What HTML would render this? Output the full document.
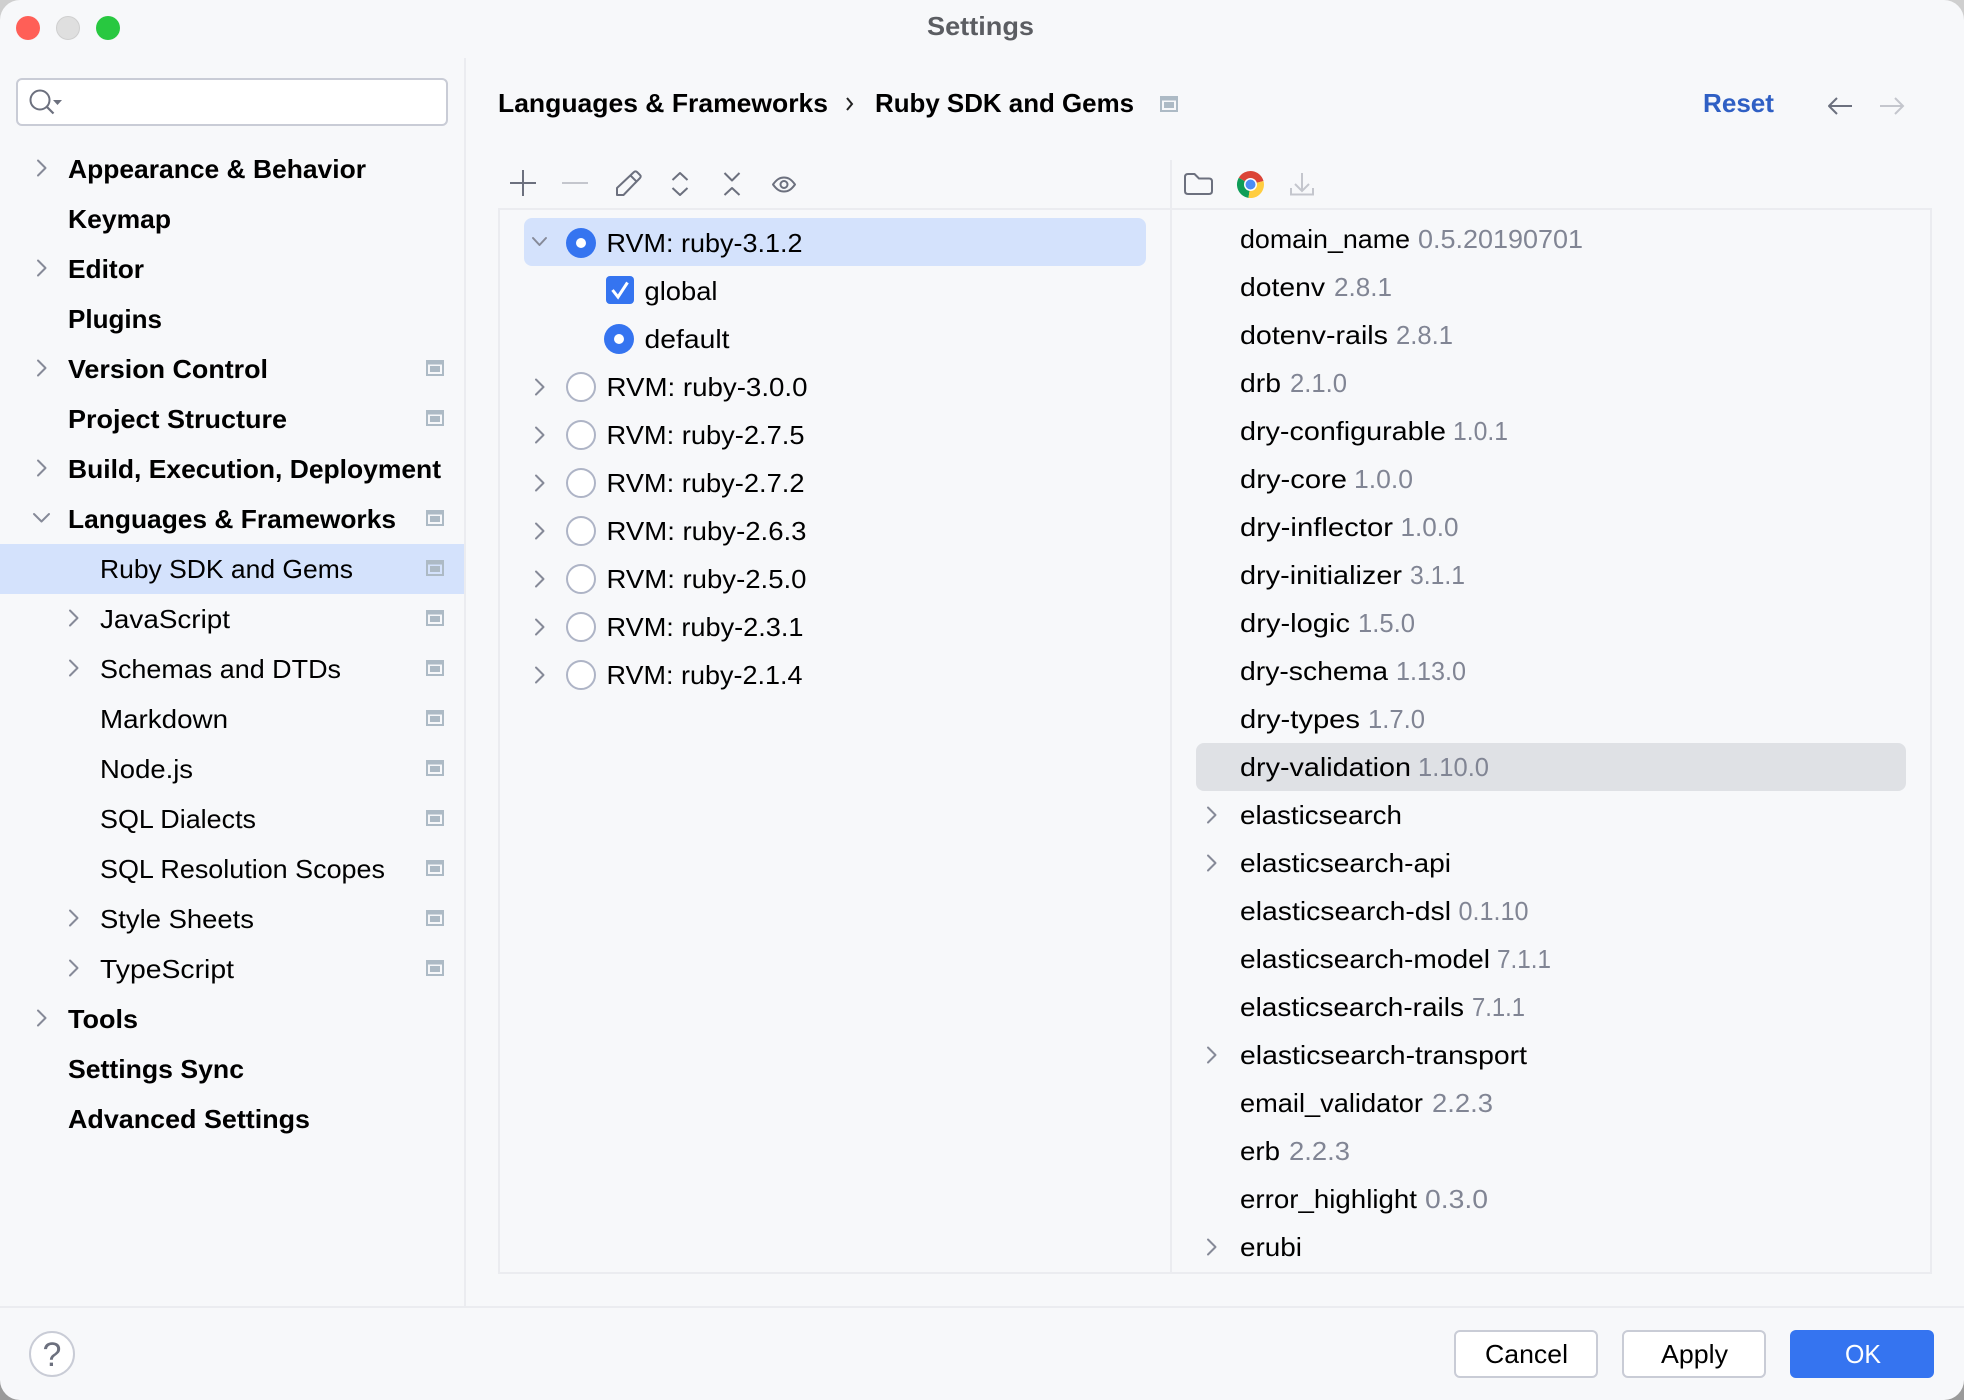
<!DOCTYPE html>
<html lang="en">
<head>
<meta charset="utf-8">
<title>Settings</title>
<style>
html,body{margin:0;padding:0;width:1964px;height:1400px;overflow:hidden;background:#c4c4c4}
svg{display:block;position:absolute;left:0;top:0}
text{font-family:"Liberation Sans",Arial,sans-serif;font-size:26px;fill:#000}
.b{font-weight:700}
.v{fill:#818594}
.c{fill:none;stroke:#868a98;stroke-width:2;stroke-linecap:round;stroke-linejoin:round}
.i{fill:none;stroke:#6c707e;stroke-width:2;stroke-linejoin:round}
.d{fill:none;stroke:#c4c6cd;stroke-width:2}
.f{fill:#adbac5}
.h{fill:#f7f8fa}
.r{fill:#fff;stroke:#aeb4c6;stroke-width:2}
</style>
</head>
<body>
<svg width="1964" height="1400" viewBox="0 0 1964 1400" xmlns="http://www.w3.org/2000/svg">
<defs>
<linearGradient id="bg" x1="0" y1="0" x2="0" y2="1"><stop offset="0" stop-color="#cfcfcf"/><stop offset="1" stop-color="#9a9a9a"/></linearGradient>
<g id="p"><rect class="f" x="0" y="0" width="18" height="16"/><rect class="h" x="2" y="4.5" width="14" height="9.5"/><rect class="f" x="4" y="6" width="10" height="6"/></g>
<path id="cr" class="c" d="M0 -7.5 L7.5 0 L0 7.5"/>
</defs>
<rect width="1964" height="1400" fill="url(#bg)"/>
<rect width="1964" height="1400" rx="20" ry="20" fill="#f7f8fa"/>

<!-- traffic lights -->
<circle cx="28" cy="28" r="12" fill="#ff5f57"/>
<circle cx="68" cy="28" r="11.5" fill="#dfdfdf" stroke="#cfcfcf"/>
<circle cx="108" cy="28" r="12" fill="#28c840"/>
<text x="927" y="35" textLength="107" lengthAdjust="spacingAndGlyphs" class="b" style="fill:#5b5d62">Settings</text>

<!-- structure lines -->
<rect x="464" y="58" width="2" height="1250" fill="#ebecf0"/>
<rect x="0" y="1306" width="1964" height="2" fill="#ebecf0"/>
<rect x="499" y="209" width="1432" height="1064" fill="none" stroke="#ebecf0" stroke-width="2"/>
<rect x="1170" y="160" width="2" height="1114" fill="#ebecf0"/>

<!-- search -->
<rect x="17" y="79" width="430" height="46" rx="5" fill="#fff" stroke="#c9ccd6" stroke-width="2"/>
<circle cx="40" cy="100" r="9.5" fill="none" stroke="#6c707e" stroke-width="2"/>
<path d="M47 107 L53.5 113.5" stroke="#6c707e" stroke-width="2.2" fill="none"/>
<path d="M53 100 H62 L57.5 105 Z" fill="#6c707e"/>

<!-- left nav -->
<rect x="0" y="544" width="464" height="50" fill="#d4e2fc"/>
<use href="#cr" x="38" y="168"/>
<use href="#cr" x="38" y="268"/>
<use href="#cr" x="38" y="368"/>
<use href="#cr" x="38" y="468"/>
<path class="c" d="M34 514 L41.500 521.500 L49 514"/>
<use href="#cr" x="70" y="618"/>
<use href="#cr" x="70" y="668"/>
<use href="#cr" x="70" y="918"/>
<use href="#cr" x="70" y="968"/>
<use href="#cr" x="38" y="1018"/>

<text x="68" y="178" textLength="298" lengthAdjust="spacingAndGlyphs" class="b">Appearance &amp; Behavior</text>
<text x="68" y="228" textLength="103" lengthAdjust="spacingAndGlyphs" class="b">Keymap</text>
<text x="68" y="278" textLength="76" lengthAdjust="spacingAndGlyphs" class="b">Editor</text>
<text x="68" y="328" textLength="94" lengthAdjust="spacingAndGlyphs" class="b">Plugins</text>
<text x="68" y="378" textLength="200" lengthAdjust="spacingAndGlyphs" class="b">Version Control</text>
<text x="68" y="428" textLength="219" lengthAdjust="spacingAndGlyphs" class="b">Project Structure</text>
<text x="68" y="478" textLength="373" lengthAdjust="spacingAndGlyphs" class="b">Build, Execution, Deployment</text>
<text x="68" y="528" textLength="328" lengthAdjust="spacingAndGlyphs" class="b">Languages &amp; Frameworks</text>
<text x="100" y="578" textLength="253" lengthAdjust="spacingAndGlyphs">Ruby SDK and Gems</text>
<text x="100" y="628" textLength="130" lengthAdjust="spacingAndGlyphs">JavaScript</text>
<text x="100" y="678" textLength="241" lengthAdjust="spacingAndGlyphs">Schemas and DTDs</text>
<text x="100" y="728" textLength="128" lengthAdjust="spacingAndGlyphs">Markdown</text>
<text x="100" y="778" textLength="93" lengthAdjust="spacingAndGlyphs">Node.js</text>
<text x="100" y="828" textLength="156" lengthAdjust="spacingAndGlyphs">SQL Dialects</text>
<text x="100" y="878" textLength="285" lengthAdjust="spacingAndGlyphs">SQL Resolution Scopes</text>
<text x="100" y="928" textLength="154" lengthAdjust="spacingAndGlyphs">Style Sheets</text>
<text x="100" y="978" textLength="134" lengthAdjust="spacingAndGlyphs">TypeScript</text>
<text x="68" y="1028" textLength="70" lengthAdjust="spacingAndGlyphs" class="b">Tools</text>
<text x="68" y="1078" textLength="176" lengthAdjust="spacingAndGlyphs" class="b">Settings Sync</text>
<text x="68" y="1128" textLength="242" lengthAdjust="spacingAndGlyphs" class="b">Advanced Settings</text>

<use href="#p" x="426" y="360"/>
<use href="#p" x="426" y="410"/>
<use href="#p" x="426" y="510"/>
<g><rect x="426" y="560" width="18" height="16" class="f"/><rect x="428" y="564.500" width="14" height="9.500" fill="#d4e2fc"/><rect x="430" y="566" width="10" height="6" class="f"/></g>
<use href="#p" x="426" y="610"/>
<use href="#p" x="426" y="660"/>
<use href="#p" x="426" y="710"/>
<use href="#p" x="426" y="760"/>
<use href="#p" x="426" y="810"/>
<use href="#p" x="426" y="860"/>
<use href="#p" x="426" y="910"/>
<use href="#p" x="426" y="960"/>

<!-- header -->
<text x="498" y="112" textLength="330" lengthAdjust="spacingAndGlyphs" class="b">Languages &amp; Frameworks</text>
<path d="M847 98 L852 104 L847 110" fill="none" stroke="#222" stroke-width="2"/>
<text x="875" y="112" textLength="259" lengthAdjust="spacingAndGlyphs" class="b">Ruby SDK and Gems</text>
<use href="#p" x="1160" y="96"/>
<text x="1703" y="112" textLength="71" lengthAdjust="spacingAndGlyphs" class="b" style="fill:#2f5fc4">Reset</text>
<path class="i" d="M1829 106 H1852 M1837 98 L1829 106 L1837 114"/>
<path class="d" d="M1880 106 H1903 M1895 98 L1903 106 L1895 114"/>

<!-- toolbar left -->
<path class="i" d="M510 183 H536 M523 170 V196"/>
<path class="d" d="M562 183 H588"/>
<path class="i" d="M617 195 V188 L634 172 a2 2 0 0 1 3 0 L640 175 a2 2 0 0 1 0 3 L623.500 195 Z M630.500 175.500 L637 182"/>
<path class="i" d="M672.500 180 L680 173 L687.500 180 M672.500 188 L680 195 L687.500 188"/>
<path class="i" d="M724.500 173 L732 180.500 L739.500 173 M724.500 195 L732 188 L739.500 195"/>
<path class="i" d="M773 184.500 C777 179 780 177.500 784 177.500 C788 177.500 791 179 795 184.500 C791 190 788 191.500 784 191.500 C780 191.500 777 190 773 184.500 Z"/>
<circle class="i" cx="784" cy="184.500" r="3.500"/>

<!-- toolbar right -->
<path class="i" d="M1185 177 q0 -3 3 -3 h6.500 l4.500 4.500 h10 q3 0 3 3 V191 q0 3 -3 3 H1188 q-3 0 -3 -3 Z"/>
<g transform="translate(1250.500 184.500)">
<path d="M0 0 L-11.700 -6.750 A13.500 13.500 0 0 1 13 -3.500 Z" fill="#db4437"/>
<path d="M0 0 L-11.700 -6.750 A13.500 13.500 0 0 0 -2 13.400 Z" fill="#0f9d58"/>
<path d="M0 0 L13 -3.500 A13.500 13.500 0 0 1 -2 13.400 Z" fill="#ffcd40"/>
<circle r="6.500" fill="#fff"/>
<circle r="5" fill="#4c8bf5"/>
</g>
<path class="d" d="M1302 173 V191 M1295 184 L1302 191 L1309 184 M1291 188 V194.500 H1313 V188"/>

<!-- SDK tree -->
<rect x="524" y="218" width="622" height="48" rx="8" fill="#d4e2fc"/>
<path class="c" d="M533 238 L539.500 245 L546 238"/>
<circle cx="581" cy="243" r="15" fill="#3574f0"/>
<circle cx="581" cy="243" r="5" fill="#fff"/>
<text x="606.500" y="252" textLength="196" lengthAdjust="spacingAndGlyphs">RVM: ruby-3.1.2</text>
<rect x="606" y="276" width="28" height="28" rx="4" fill="#3574f0"/>
<path d="M612.500 290 L618 297 L627.500 282.500" fill="none" stroke="#fff" stroke-width="3"/>
<text x="644.500" y="300" textLength="73" lengthAdjust="spacingAndGlyphs">global</text>
<circle cx="619" cy="339" r="15" fill="#3574f0"/>
<circle cx="619" cy="339" r="5" fill="#fff"/>
<text x="644.500" y="348" textLength="85" lengthAdjust="spacingAndGlyphs">default</text>

<use href="#cr" x="536" y="387"/><circle class="r" cx="581" cy="387" r="14"/>
<text x="606.500" y="396" textLength="201" lengthAdjust="spacingAndGlyphs">RVM: ruby-3.0.0</text>
<use href="#cr" x="536" y="435"/><circle class="r" cx="581" cy="435" r="14"/>
<text x="606.500" y="444" textLength="198" lengthAdjust="spacingAndGlyphs">RVM: ruby-2.7.5</text>
<use href="#cr" x="536" y="483"/><circle class="r" cx="581" cy="483" r="14"/>
<text x="606.500" y="492" textLength="198" lengthAdjust="spacingAndGlyphs">RVM: ruby-2.7.2</text>
<use href="#cr" x="536" y="531"/><circle class="r" cx="581" cy="531" r="14"/>
<text x="606.500" y="540" textLength="200" lengthAdjust="spacingAndGlyphs">RVM: ruby-2.6.3</text>
<use href="#cr" x="536" y="579"/><circle class="r" cx="581" cy="579" r="14"/>
<text x="606.500" y="588" textLength="200" lengthAdjust="spacingAndGlyphs">RVM: ruby-2.5.0</text>
<use href="#cr" x="536" y="627"/><circle class="r" cx="581" cy="627" r="14"/>
<text x="606.500" y="636" textLength="197" lengthAdjust="spacingAndGlyphs">RVM: ruby-2.3.1</text>
<use href="#cr" x="536" y="675"/><circle class="r" cx="581" cy="675" r="14"/>
<text x="606.500" y="684" textLength="196" lengthAdjust="spacingAndGlyphs">RVM: ruby-2.1.4</text>

<!-- gems -->
<rect x="1196" y="743" width="710" height="48" rx="8" fill="#dfe1e5"/>
<text x="1240" y="248" textLength="170" lengthAdjust="spacingAndGlyphs">domain_name</text><text class="v" x="1418" y="248" textLength="165" lengthAdjust="spacingAndGlyphs">0.5.20190701</text>
<text x="1240" y="296" textLength="85" lengthAdjust="spacingAndGlyphs">dotenv</text><text class="v" x="1334" y="296" textLength="58" lengthAdjust="spacingAndGlyphs">2.8.1</text>
<text x="1240" y="344" textLength="148" lengthAdjust="spacingAndGlyphs">dotenv-rails</text><text class="v" x="1396" y="344" textLength="57" lengthAdjust="spacingAndGlyphs">2.8.1</text>
<text x="1240" y="392" textLength="41" lengthAdjust="spacingAndGlyphs">drb</text><text class="v" x="1290" y="392" textLength="57" lengthAdjust="spacingAndGlyphs">2.1.0</text>
<text x="1240" y="440" textLength="206" lengthAdjust="spacingAndGlyphs">dry-configurable</text><text class="v" x="1453" y="440" textLength="55" lengthAdjust="spacingAndGlyphs">1.0.1</text>
<text x="1240" y="488" textLength="107" lengthAdjust="spacingAndGlyphs">dry-core</text><text class="v" x="1354" y="488" textLength="59" lengthAdjust="spacingAndGlyphs">1.0.0</text>
<text x="1240" y="536" textLength="153" lengthAdjust="spacingAndGlyphs">dry-inflector</text><text class="v" x="1400.500" y="536" textLength="58" lengthAdjust="spacingAndGlyphs">1.0.0</text>
<text x="1240" y="584" textLength="162" lengthAdjust="spacingAndGlyphs">dry-initializer</text><text class="v" x="1410" y="584" textLength="55" lengthAdjust="spacingAndGlyphs">3.1.1</text>
<text x="1240" y="632" textLength="110" lengthAdjust="spacingAndGlyphs">dry-logic</text><text class="v" x="1358" y="632" textLength="57" lengthAdjust="spacingAndGlyphs">1.5.0</text>
<text x="1240" y="680" textLength="148" lengthAdjust="spacingAndGlyphs">dry-schema</text><text class="v" x="1396" y="680" textLength="70" lengthAdjust="spacingAndGlyphs">1.13.0</text>
<text x="1240" y="728" textLength="120" lengthAdjust="spacingAndGlyphs">dry-types</text><text class="v" x="1368" y="728" textLength="57" lengthAdjust="spacingAndGlyphs">1.7.0</text>
<text x="1240" y="776" textLength="171" lengthAdjust="spacingAndGlyphs">dry-validation</text><text class="v" x="1418" y="776" textLength="71" lengthAdjust="spacingAndGlyphs">1.10.0</text>
<use href="#cr" x="1208" y="815"/><text x="1240" y="824" textLength="162" lengthAdjust="spacingAndGlyphs">elasticsearch</text>
<use href="#cr" x="1208" y="863"/><text x="1240" y="872" textLength="211" lengthAdjust="spacingAndGlyphs">elasticsearch-api</text>
<text x="1240" y="920" textLength="211" lengthAdjust="spacingAndGlyphs">elasticsearch-dsl</text><text class="v" x="1458.500" y="920" textLength="70" lengthAdjust="spacingAndGlyphs">0.1.10</text>
<text x="1240" y="968" textLength="250" lengthAdjust="spacingAndGlyphs">elasticsearch-model</text><text class="v" x="1497" y="968" textLength="54" lengthAdjust="spacingAndGlyphs">7.1.1</text>
<text x="1240" y="1016" textLength="224" lengthAdjust="spacingAndGlyphs">elasticsearch-rails</text><text class="v" x="1472" y="1016" textLength="53" lengthAdjust="spacingAndGlyphs">7.1.1</text>
<use href="#cr" x="1208" y="1055"/><text x="1240" y="1064" textLength="287" lengthAdjust="spacingAndGlyphs">elasticsearch-transport</text>
<text x="1240" y="1112" textLength="183" lengthAdjust="spacingAndGlyphs">email_validator</text><text class="v" x="1432" y="1112" textLength="61" lengthAdjust="spacingAndGlyphs">2.2.3</text>
<text x="1240" y="1160" textLength="40" lengthAdjust="spacingAndGlyphs">erb</text><text class="v" x="1289" y="1160" textLength="61" lengthAdjust="spacingAndGlyphs">2.2.3</text>
<text x="1240" y="1208" textLength="177" lengthAdjust="spacingAndGlyphs">error_highlight</text><text class="v" x="1425" y="1208" textLength="63" lengthAdjust="spacingAndGlyphs">0.3.0</text>
<use href="#cr" x="1208" y="1247"/><text x="1240" y="1256" textLength="62" lengthAdjust="spacingAndGlyphs">erubi</text>

<!-- footer -->
<circle cx="52" cy="1354" r="22" fill="#fff" stroke="#c9ccd6" stroke-width="2"/>
<text x="52" y="1366" text-anchor="middle" style="font-size:34px;fill:#6c707e">?</text>
<rect x="1455" y="1331" width="142" height="46" rx="5" fill="#fff" stroke="#c9ccd6" stroke-width="2"/>
<text x="1485" y="1363" textLength="83" lengthAdjust="spacingAndGlyphs">Cancel</text>
<rect x="1623" y="1331" width="142" height="46" rx="5" fill="#fff" stroke="#c9ccd6" stroke-width="2"/>
<text x="1661" y="1363" textLength="67" lengthAdjust="spacingAndGlyphs">Apply</text>
<rect x="1790" y="1330" width="144" height="48" rx="6" fill="#3574f0"/>
<text x="1845" y="1363" textLength="36" lengthAdjust="spacingAndGlyphs" style="fill:#fff">OK</text>
</svg>
</body>
</html>
